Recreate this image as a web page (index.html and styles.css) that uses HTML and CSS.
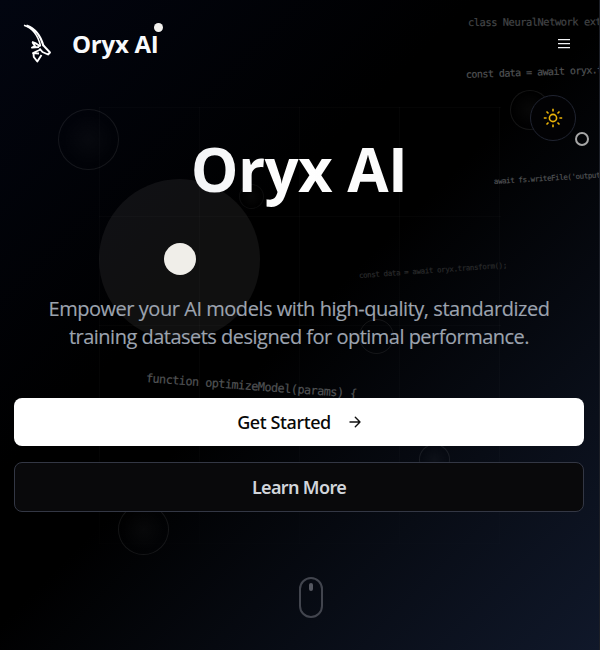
FILE: index.html
```html
<!DOCTYPE html>
<html lang="en">
<head>
<meta charset="utf-8">
<title>Oryx AI</title>
<link rel="stylesheet" href="styles.css">
</head>
<body>
<div class="page">
  <div class="backdrop" aria-hidden="true">
    <div class="grid"></div>
    <i class="orb orb-a"></i><i class="orb orb-b"></i><i class="orb orb-c"></i>
    <i class="orb orb-d"></i><i class="orb orb-e"></i><i class="orb orb-f"></i>
    <div class="halo"></div>
    <span class="code code-a">class NeuralNetwork ext</span>
    <span class="code code-b">const data = await oryx.t</span>
    <span class="code code-c">await fs.writeFile('output</span>
    <span class="code code-d">const data = await oryx.transform();</span>
    <span class="code code-e">function optimizeModel(params) {</span>
  </div>
  <header class="header">
    <div class="brand">
      <svg class="logo" viewBox="0 0 30 40" fill="none" stroke="#fff" stroke-linejoin="round">
        <path d="M2 1.300C10 4 16 11 18.500 22" stroke-width="1.500"/>
        <path d="M4.500 1.500C13 4.500 18.500 11 21.500 22" stroke-width="2"/>
        <path d="M10 18l4 1.500 4.500 3M10.500 18.500l2.500 3.500-3 1.500 7-.5M21 21l7 7.500-2 2-5.500-2.500-3-3.500" stroke-width="1.900"/>
        <path d="M18.500 25.500l-7.500 3.500 6 .5M11.500 29.500l.3 3.500 3.500 4.500 4.200-6.500" stroke-width="1.900"/>
      </svg>
      <span class="brand-name">Oryx AI</span>
      <i class="brand-dot"></i>
    </div>
    <svg class="menu" viewBox="0 0 12 10" stroke="#f3f4f6" stroke-width="1.300"><path d="M0 .7h12M0 4.700h12M0 8.700h12"/></svg>
  </header>
  <main class="hero">
    <h1>Oryx AI</h1>
    <p><span class="line-a">Empower your AI models with high-quality, standardized</span><br><span class="line-b">training datasets designed for optimal performance.</span></p>
    <div class="actions">
      <a class="button primary"><span>Get Started</span>
        <svg class="arrow" viewBox="0 0 12 12" fill="none" stroke="#111" stroke-width="1.400" stroke-linecap="round" stroke-linejoin="round"><path d="M1 6h10M6.300 1.300L11 6l-4.700 4.700"/></svg></a>
      <a class="button secondary"><span>Learn More</span></a>
    </div>
    <div class="mouse"><i></i></div>
  </main>
  <div class="theme">
    <svg viewBox="0 0 20 20" fill="none" stroke="#eab308" stroke-width="1.600"><circle cx="10" cy="10" r="3.600"/><path d="M10 .8v2.800M10 16.400v2.800M.8 10h2.800M16.400 10h2.800M3.500 3.500l2 2M14.500 14.500l2 2M3.500 16.500l2-2M14.500 5.500l2-2"/></svg>
  </div>
  <i class="cursor-dot"></i>
  <i class="cursor-ring"></i>
</div>
</body>
</html>
```
FILE: styles.css
```css
* { box-sizing: border-box; }
body { margin: 0; background: #000; font-family: "Open Sans", "Noto Sans", sans-serif; }
.page { position: relative; width: 600px; height: 650px; overflow: hidden; background: linear-gradient(135deg, #020510 0%, #000 38%, #000 50%, #10182a 100%); border-right: 1px solid #1c1f27; }
.backdrop { position: absolute; inset: 0; }
.grid { position: absolute; left: 99px; top: 107px; width: 402px; height: 480px; background: repeating-linear-gradient(90deg, rgba(255,255,255,.02) 0 1px, transparent 1px 100px), repeating-linear-gradient(180deg, rgba(255,255,255,.02) 0 1px, transparent 1px 109px); -webkit-mask-image: linear-gradient(#000 70%, transparent); mask-image: linear-gradient(#000 70%, transparent); }
.orb { position: absolute; border-radius: 50%; border: 1px solid rgba(255,255,255,.08); background: radial-gradient(circle, rgba(255,255,255,.028), transparent 70%); }
.orb-a { left: 58px; top: 109px; width: 61px; height: 61px; }
.orb-b { left: 510px; top: 90px; width: 40px; height: 40px; }
.orb-c { left: 239px; top: 184px; width: 25px; height: 25px; z-index: 1; border-color: rgba(255,255,255,.05); }
.orb-d { left: 359px; top: 319px; width: 35px; height: 35px; border-color: rgba(255,255,255,.075); background: none; }
.orb-e { left: 419px; top: 444px; width: 31px; height: 31px; }
.orb-f { left: 118px; top: 504px; width: 51px; height: 51px; }
.halo { position: absolute; left: 99px; top: 179px; width: 161px; height: 161px; border-radius: 50%; background: rgba(240,238,233,.066); }
.code { position: absolute; white-space: pre; font-family: "DejaVu Sans Mono", monospace; color: #505254; transform-origin: 0 50%; line-height: 14px; -webkit-text-stroke: .2px currentColor; }
.code-a { left: 468px; top: 15px; font-size: 10.4px; letter-spacing: -.46px; transform: rotate(-.3deg); color: #434547; }
.code-b { left: 466px; top: 68px; font-size: 10px; letter-spacing: -.55px; transform: rotate(-2deg); }
.code-c { left: 494px; top: 175px; font-size: 7.4px; letter-spacing: -.36px; transform: rotate(-3.500deg); }
.code-d { left: 359px; top: 269px; font-size: 7.4px; letter-spacing: -.33px; transform: rotate(-4deg); color: #292a2b; }
.code-e { left: 146px; top: 371px; font-size: 11.8px; letter-spacing: -.5px; transform: rotate(4.300deg); }
.header { position: relative; display: flex; height: 88px; align-items: center; justify-content: space-between; padding: 0 29px 0 22px; }
.brand { display: flex; align-items: center; position: relative; }
.logo { width: 30px; height: 40px; }
.brand-name { margin-left: 20px; color: #f8fafc; font-size: 24px; line-height: 32px; font-weight: 700; letter-spacing: -.25px; }
.brand-dot { position: absolute; left: 132px; top: -1px; width: 9px; height: 9px; border-radius: 50%; background: #f2f1ee; }
.menu { width: 12px; height: 10px; }
.hero { position: relative; display: flex; flex-direction: column; align-items: center; padding: 42px 15px 0 14px; }
h1 { margin: 0; font-size: 60px; line-height: 78px; font-weight: 700; letter-spacing: -.6px; color: transparent; background: linear-gradient(90deg, #f3f4f6, #fff 50%, #fafafa); -webkit-background-clip: text; background-clip: text; }
p { margin: 87px 0 0; font-size: 20px; line-height: 28px; color: #9ca3af; text-align: center; white-space: nowrap; -webkit-text-stroke: .15px #9ca3af; }
.line-a { letter-spacing: -.46px; }
.line-b { letter-spacing: -.51px; }
.actions { display: flex; flex-direction: column; gap: 16px; width: 100%; margin-top: 47px; }
.button { display: flex; align-items: center; justify-content: center; border-radius: 8px; height: 48px; font-family: "Noto Sans", "Open Sans", sans-serif; font-size: 18px; font-weight: 500; letter-spacing: -.4px; }
.primary { background: #fff; color: #080808; gap: 18px; }
.arrow { width: 12px; height: 12px; }
.secondary { height: 50px; background: #09090b; border: 1px solid #333744; color: #d1d5db; font-weight: 600; letter-spacing: -.65px; }
.mouse { width: 24px; height: 41px; margin: 65px 0 0 23px; border: 2px solid #42454e; border-radius: 12px; display: flex; justify-content: center; padding-top: 4px; }
.mouse i { width: 4px; height: 8px; border-radius: 2px; background: #555861; }
.theme { position: absolute; left: 530px; top: 95px; width: 46px; height: 46px; border-radius: 50%; border: 1px solid #202431; background: #020204; display: flex; align-items: center; justify-content: center; }
.theme svg { width: 20px; height: 20px; }
.cursor-dot { position: absolute; left: 164px; top: 243px; width: 32px; height: 32px; border-radius: 50%; background: #f0eee9; }
.cursor-ring { position: absolute; left: 575px; top: 132px; width: 14px; height: 14px; border-radius: 50%; border: 2px solid #a6a6a6; }
```
